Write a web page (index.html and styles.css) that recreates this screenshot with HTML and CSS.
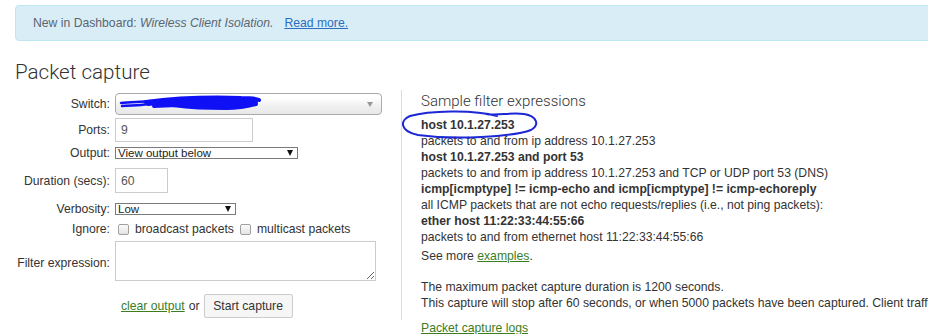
FILE: index.html
```html
<!DOCTYPE html>
<html lang="en">
<head>
  <meta charset="UTF-8" />
  <title>Packet capture</title>
  <link rel="stylesheet" href="styles.css">
</head>
<body>
  <div class="alert">
    New in Dashboard: <em>Wireless Client Isolation.</em><a href="#">Read more.</a>
  </div>

  <h1>Packet capture</h1>

  <div class="capture">
    <form class="capture-form">
      <div class="row row-switch">
        <label>Switch:</label>
        <div class="chosen">
          <span class="chosen-arrow"></span>
          <!-- redaction scribble -->
          <svg class="scribble" width="150" height="20" viewBox="0 0 150 20">
            <path class="thin" d="M5 9 C 15 8, 25 8, 35 7" />
            <path class="thin" d="M6 12 C 14 11, 22 12, 32 10" />
            <path d="M30 8 C 60 4, 95 3, 125 4 C 135 4, 141 5, 143 6" />
            <path d="M32 10 C 60 7, 100 6, 140 8" />
            <path d="M38 12 C 70 10, 100 11, 135 10" />
            <path d="M45 9 C 70 14, 100 15, 130 12" />
            <path d="M60 6 C 80 10, 105 12, 138 9" />
            <path d="M95 13 C 110 15, 125 14, 140 10" />
          </svg>
        </div>
      </div>
      <div class="row row-ports">
        <label>Ports:</label>
        <input type="text" class="text-input ports" value="9" />
      </div>
      <div class="row row-output">
        <label>Output:</label>
        <div class="mini-select output"><span>View output below</span><b></b></div>
      </div>
      <div class="row row-duration">
        <label>Duration (secs):</label>
        <input type="text" class="text-input duration" value="60" />
      </div>
      <div class="row row-verbosity">
        <label>Verbosity:</label>
        <div class="mini-select verbosity"><span>Low</span><b></b></div>
      </div>
      <div class="row row-ignore">
        <label>Ignore:</label>
        <div class="checks">
          <input type="checkbox" id="bcast" /><span>broadcast packets</span>
          <input type="checkbox" id="mcast" /><span>multicast packets</span>
        </div>
      </div>
      <div class="row row-filter">
        <label>Filter expression:</label>
        <textarea></textarea>
      </div>
      <div class="row row-actions">
        <label></label>
        <div class="actions">
          <a href="#">clear output</a> or <button type="button">Start capture</button>
        </div>
      </div>
    </form>

    <div class="samples">
      <h2>Sample filter expressions</h2>
      <dl>
        <dt>host 10.1.27.253</dt>
        <dd>packets to and from ip address 10.1.27.253</dd>
        <dt>host 10.1.27.253 and port 53</dt>
        <dd>packets to and from ip address 10.1.27.253 and TCP or UDP port 53 (DNS)</dd>
        <dt>icmp[icmptype] != icmp-echo and icmp[icmptype] != icmp-echoreply</dt>
        <dd>all ICMP packets that are not echo requests/replies (i.e., not ping packets):</dd>
        <dt>ether host 11:22:33:44:55:66</dt>
        <dd>packets to and from ethernet host 11:22:33:44:55:66</dd>
      </dl>
      <p class="more">See more <a href="#">examples</a>.</p>
      <p class="limits">
        The maximum packet capture duration is 1200 seconds.<br>
        This capture will stop after 60 seconds, or when 5000 packets have been captured. Client traffic may not be visible.
      </p>
    </div>
  </div>

  <a class="logs" href="#">Packet capture logs</a>

  <!-- hand-drawn annotation around the first example -->
  <svg class="annotation" width="928" height="334" viewBox="0 0 928 334">
    <path d="M497 116 C 472 109, 428 111, 410 116 C 400 120, 399 131, 418 135 C 455 140, 512 137, 531 130 C 540 125, 537 116, 524 114 C 511 112, 498 116, 486 114" />
  </svg>
</body>
</html>
```

FILE: styles.css
```css
html, body {
  overflow: hidden;
}
body {
  font-family: 'Liberation Sans', Arial, sans-serif;
  font-size: 12.2px;
  line-height: 16px;
  color: #333;
  background: #fff;
  margin: 0;
  padding: 5px 0 0 15px;
  position: relative;
  height: 329px;
}
a {
  color: #3b7d1f;
}
.alert {
  background-color: #d9edf7;
  border: 1px solid #bce8f1;
  border-radius: 4px;
  color: #5b6670;
  padding: 8px 17px 8px 17px;
  line-height: 18px;
  width: 960px;
  white-space: nowrap;
}
.alert a {
  color: #2a6ebd;
  margin-left: 11px;
}
h1 {
  font-family: Roboto, 'Liberation Sans', sans-serif;
  font-weight: 300;
  font-size: 20.6px;
  line-height: 24px;
  color: #333;
  margin: 19px 0 6px 0;
}
.capture {
  display: flex;
  align-items: stretch;
}
.capture-form {
  width: 386px;
  padding-top: 3px;
  flex-shrink: 0;
}
.row {
  display: flex;
  align-items: center;
}
.row label {
  width: 95px;
  margin-right: 5px;
  text-align: right;
  flex-shrink: 0;
}
.row-switch { height: 22px; margin-bottom: 3px; }
.row-ports { height: 24px; margin-bottom: 3px; }
.row-output { height: 16px; margin-bottom: 7px; }
.row-duration { height: 25px; margin-bottom: 8px; }
.row-verbosity { height: 16px; margin-bottom: 4px; }
.row-ignore { height: 16px; margin-bottom: 4px; }
.row-filter { height: 40px; margin-bottom: 13px; }
.row-filter label { padding-top: 4px; }
.row-actions { height: 24px; }

/* chosen-style dropdown */
.chosen {
  position: relative;
  width: 267px;
  height: 22px;
  box-sizing: border-box;
  border: 1px solid #aaa;
  border-radius: 4px;
  background: linear-gradient(#fff 20%, #f0f0f0 60%, #e8e8e8);
  display: flex;
  justify-content: flex-end;
  align-items: center;
  padding-right: 8px;
}
.chosen-arrow {
  width: 0;
  height: 0;
  border-left: 3px solid transparent;
  border-right: 3px solid transparent;
  border-top: 5px solid #999;
}
.scribble {
  position: absolute;
  left: 0;
  top: 0;
}
.scribble path {
  fill: none;
  stroke: #1010f5;
  stroke-width: 4;
  stroke-linecap: round;
}
.scribble .thin {
  stroke-width: 2.5;
}

.text-input {
  font-family: inherit;
  font-size: 12.2px;
  color: #555;
  border: 1px solid #ccc;
  box-sizing: border-box;
  padding: 0 5px;
  margin: 0;
  outline: none;
}
.ports {
  width: 138px;
  height: 24px;
}
.duration {
  width: 53px;
  height: 25px;
}

/* small native-looking select */
.mini-select {
  height: 12px;
  box-sizing: border-box;
  border: 1px solid #7a7a7a;
  display: flex;
  align-items: center;
  justify-content: space-between;
  padding: 0 4px 0 2px;
  font-size: 11.5px;
  line-height: 10px;
  color: #222;
}
.mini-select b {
  width: 0;
  height: 0;
  border-left: 3.5px solid transparent;
  border-right: 3.5px solid transparent;
  border-top: 6px solid #111;
}
.output { width: 183px; }
.verbosity { width: 121px; }

.checks {
  display: flex;
  align-items: center;
}
.checks input {
  appearance: none;
  width: 11px;
  height: 11px;
  margin: 0 6px 0 3px;
  border: 1px solid #a0a0a0;
  border-radius: 2px;
  background: linear-gradient(#fbfbfb, #e4e4e4);
}
.checks span {
  margin-right: 3px;
}

textarea {
  width: 261px;
  height: 40px;
  box-sizing: border-box;
  border: 1px solid #ccc;
  margin: 0;
  font-family: inherit;
}

.actions {
  padding-left: 6px;
  display: flex;
  align-items: center;
  gap: 4px;
}
.actions button {
  font-family: inherit;
  font-size: 12.2px;
  color: #333;
  background: #f6f6f6;
  border: 1px solid #ccc;
  border-radius: 2px;
  width: 89px;
  height: 24px;
  margin-left: 0;
  padding: 0;
}

.samples {
  border-left: 1px solid #ddd;
  padding: 2px 0 9px 19px;
  white-space: nowrap;
}
.samples h2 {
  font-family: Roboto, 'Liberation Sans', sans-serif;
  font-weight: 300;
  font-size: 15px;
  line-height: 18px;
  margin: 0 0 7px 0;
}
dl {
  margin: 0;
}
dt {
  font-weight: bold;
}
dd {
  margin: 0;
}
.more {
  margin: 3px 0 0 0;
}
.limits {
  margin: 15px 0 0 0;
}
.logs {
  display: inline-block;
  margin-left: 406px;
}
.annotation {
  position: absolute;
  left: 0;
  top: 0;
  pointer-events: none;
}
.annotation path {
  fill: none;
  stroke: #1c27d6;
  stroke-width: 2;
  stroke-linecap: round;
}
```
